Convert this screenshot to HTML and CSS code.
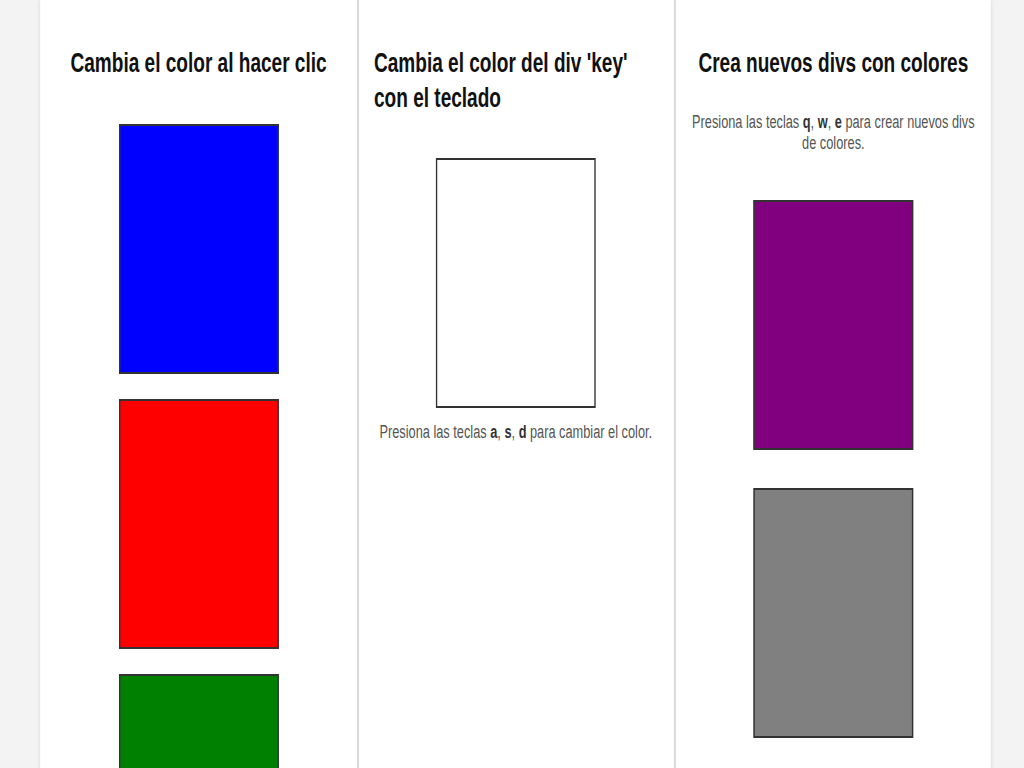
FILE: index.html
```html
<!DOCTYPE html>
<html lang="es">
<head>
<meta charset="utf-8">
<title>Eventos</title>
<link rel="stylesheet" href="styles.css">
</head>
<body>
<div class="page">
  <main class="board">
    <section class="col col-click">
      <h2 class="title title-center">Cambia el color al hacer clic</h2>
      <div class="stack stack-click">
        <div class="box blue"></div>
        <div class="box red"></div>
        <div class="box green"></div>
      </div>
    </section>
    <section class="col col-key">
      <h2 class="title title-left">Cambia el color del div 'key' con el teclado</h2>
      <div class="stack">
        <div class="box white"></div>
      </div>
      <p class="hint hint-key">Presiona las teclas <b>a</b>, <b>s</b>, <b>d</b> para cambiar el color.</p>
    </section>
    <section class="col col-new">
      <h2 class="title title-center title-tight">Crea nuevos divs con colores</h2>
      <p class="hint hint-new">Presiona las teclas <b>q</b>, <b>w</b>, <b>e</b> para crear nuevos divs de colores.</p>
      <div class="stack stack-new">
        <div class="box purple"></div>
        <div class="box gray"></div>
      </div>
    </section>
  </main>
</div>
</body>
</html>
```
FILE: styles.css
```css
html, body {
  margin: 0;
  padding: 0;
  overflow: hidden;
  background: #f3f3f3;
  font-family: "Liberation Sans", Arial, sans-serif;
}

.page {
  width: 1506px;
  transform: scaleX(0.68);
  transform-origin: 0 0;
}

.board {
  margin-left: 59px;
  width: 1398px;
  min-height: 768px;
  background: #ffffff;
  box-shadow: 0 0 5px rgba(0, 0, 0, 0.12);
  display: grid;
  grid-template-columns: repeat(3, 1fr);
}

.col {
  padding: 46px 24px 0;
  display: flex;
  flex-direction: column;
  align-items: center;
}

.col-key {
  padding-left: 22px;
}

.col-new {
  padding-left: 16px;
  padding-right: 16px;
}

.col + .col {
  border-left: 3px solid #dadada;
}

.title {
  margin: 0 0 43px;
  font-size: 28px;
  line-height: 34.5px;
  font-weight: bold;
  color: #111111;
  align-self: stretch;
}

.title-center { text-align: center; }
.title-left { text-align: left; }
.title-tight { margin-bottom: 30px; }

.stack {
  display: flex;
  flex-direction: column;
  align-items: center;
}

.stack-click { gap: 25px; }
.stack-new { gap: 38px; }

.box {
  width: 235px;
  height: 250px;
  box-sizing: border-box;
  border: 2px solid #333333;
}

.blue { background: #0000ff; }
.red { background: #ff0000; }
.green { background: #008000; }
.white { background: #ffffff; }
.purple { background: #800080; }
.gray { background: #808080; }

.hint {
  margin: 0;
  font-size: 18.8px;
  line-height: 21px;
  color: #555555;
  text-align: center;
  align-self: stretch;
}

.hint b {
  color: #333333;
}

.hint-key { margin-top: 13px; }
.hint-new { margin-bottom: 47px; }
```
